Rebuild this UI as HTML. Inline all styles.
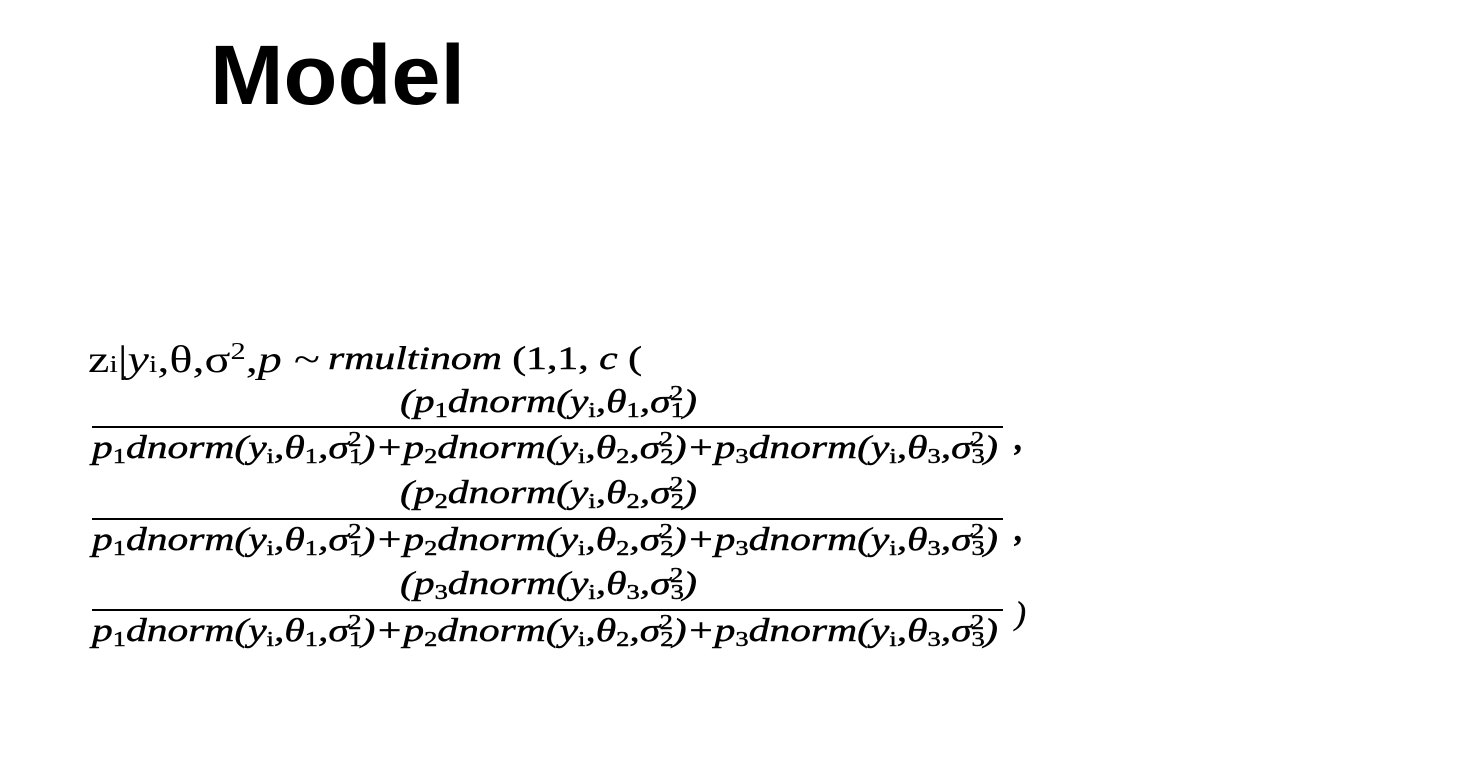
<!DOCTYPE html>
<html><head><meta charset="utf-8"><style>
body{margin:0;width:1458px;height:784px;background:#fff;overflow:hidden}
svg{position:absolute;left:0;top:0}
.t{font-family:"Liberation Sans",sans-serif;font-weight:bold;font-size:84px;fill:#000}
.m{font-family:"Liberation Serif",serif;font-style:italic;font-size:33px;fill:#000;stroke:#000;stroke-width:0.45}
.u{font-family:"Liberation Serif",serif;font-size:38px;fill:#000}
.s{font-size:21px;font-style:normal}
</style></head><body>
<svg width="1458" height="784" viewBox="0 0 1458 784">
<text class="t" x="210" y="104" textLength="255" lengthAdjust="spacingAndGlyphs">Model</text>
<text class="u" x="88" y="372" textLength="232" lengthAdjust="spacingAndGlyphs">z<tspan font-size="24">i</tspan>|<tspan font-style="italic">y</tspan><tspan font-size="24">i</tspan>,θ,σ<tspan font-size="24" dy="-13">2</tspan><tspan dy="13">,</tspan><tspan font-style="italic">p</tspan> ~</text>
<text class="m" x="328" y="369" font-size="28" stroke-width="0" textLength="314" lengthAdjust="spacingAndGlyphs">rmultinom <tspan font-style="normal">(1,1,</tspan> c <tspan font-style="normal">(</tspan></text>

<text class="m" x="400" y="412" textLength="297" lengthAdjust="spacingAndGlyphs">(p<tspan class="s" dy="5">1</tspan><tspan dy="-5">dnorm(y</tspan><tspan class="s" font-style="italic" dy="5">i</tspan><tspan dy="-5">,θ</tspan><tspan class="s" dy="5">1</tspan><tspan dy="-5">,σ</tspan><tspan class="s" dy="5">1</tspan><tspan class="s" dy="-17" dx="-11">2</tspan><tspan dy="12">)</tspan></text>
<rect x="92" y="426" width="911" height="2" fill="#000"/>
<text class="m" x="92" y="458" textLength="906" lengthAdjust="spacingAndGlyphs">p<tspan class="s" dy="5">1</tspan><tspan dy="-5">dnorm(y</tspan><tspan class="s" font-style="italic" dy="5">i</tspan><tspan dy="-5">,θ</tspan><tspan class="s" dy="5">1</tspan><tspan dy="-5">,σ</tspan><tspan class="s" dy="5">1</tspan><tspan class="s" dy="-17" dx="-11">2</tspan><tspan dy="12">)+p</tspan><tspan class="s" dy="5">2</tspan><tspan dy="-5">dnorm(y</tspan><tspan class="s" font-style="italic" dy="5">i</tspan><tspan dy="-5">,θ</tspan><tspan class="s" dy="5">2</tspan><tspan dy="-5">,σ</tspan><tspan class="s" dy="5">2</tspan><tspan class="s" dy="-17" dx="-11">2</tspan><tspan dy="12">)+p</tspan><tspan class="s" dy="5">3</tspan><tspan dy="-5">dnorm(y</tspan><tspan class="s" font-style="italic" dy="5">i</tspan><tspan dy="-5">,θ</tspan><tspan class="s" dy="5">3</tspan><tspan dy="-5">,σ</tspan><tspan class="s" dy="5">3</tspan><tspan class="s" dy="-17" dx="-11">2</tspan><tspan dy="12">)</tspan></text>
<text class="m" x="1015" y="450" font-style="normal" font-weight="bold">,</text>

<text class="m" x="400" y="503" textLength="297" lengthAdjust="spacingAndGlyphs">(p<tspan class="s" dy="5">2</tspan><tspan dy="-5">dnorm(y</tspan><tspan class="s" font-style="italic" dy="5">i</tspan><tspan dy="-5">,θ</tspan><tspan class="s" dy="5">2</tspan><tspan dy="-5">,σ</tspan><tspan class="s" dy="5">2</tspan><tspan class="s" dy="-17" dx="-11">2</tspan><tspan dy="12">)</tspan></text>
<rect x="92" y="518" width="911" height="2" fill="#000"/>
<text class="m" x="92" y="550" textLength="906" lengthAdjust="spacingAndGlyphs">p<tspan class="s" dy="5">1</tspan><tspan dy="-5">dnorm(y</tspan><tspan class="s" font-style="italic" dy="5">i</tspan><tspan dy="-5">,θ</tspan><tspan class="s" dy="5">1</tspan><tspan dy="-5">,σ</tspan><tspan class="s" dy="5">1</tspan><tspan class="s" dy="-17" dx="-11">2</tspan><tspan dy="12">)+p</tspan><tspan class="s" dy="5">2</tspan><tspan dy="-5">dnorm(y</tspan><tspan class="s" font-style="italic" dy="5">i</tspan><tspan dy="-5">,θ</tspan><tspan class="s" dy="5">2</tspan><tspan dy="-5">,σ</tspan><tspan class="s" dy="5">2</tspan><tspan class="s" dy="-17" dx="-11">2</tspan><tspan dy="12">)+p</tspan><tspan class="s" dy="5">3</tspan><tspan dy="-5">dnorm(y</tspan><tspan class="s" font-style="italic" dy="5">i</tspan><tspan dy="-5">,θ</tspan><tspan class="s" dy="5">3</tspan><tspan dy="-5">,σ</tspan><tspan class="s" dy="5">3</tspan><tspan class="s" dy="-17" dx="-11">2</tspan><tspan dy="12">)</tspan></text>
<text class="m" x="1015" y="541" font-style="normal" font-weight="bold">,</text>

<text class="m" x="400" y="594" textLength="297" lengthAdjust="spacingAndGlyphs">(p<tspan class="s" dy="5">3</tspan><tspan dy="-5">dnorm(y</tspan><tspan class="s" font-style="italic" dy="5">i</tspan><tspan dy="-5">,θ</tspan><tspan class="s" dy="5">3</tspan><tspan dy="-5">,σ</tspan><tspan class="s" dy="5">3</tspan><tspan class="s" dy="-17" dx="-11">2</tspan><tspan dy="12">)</tspan></text>
<rect x="92" y="609" width="911" height="2" fill="#000"/>
<text class="m" x="92" y="641" textLength="906" lengthAdjust="spacingAndGlyphs">p<tspan class="s" dy="5">1</tspan><tspan dy="-5">dnorm(y</tspan><tspan class="s" font-style="italic" dy="5">i</tspan><tspan dy="-5">,θ</tspan><tspan class="s" dy="5">1</tspan><tspan dy="-5">,σ</tspan><tspan class="s" dy="5">1</tspan><tspan class="s" dy="-17" dx="-11">2</tspan><tspan dy="12">)+p</tspan><tspan class="s" dy="5">2</tspan><tspan dy="-5">dnorm(y</tspan><tspan class="s" font-style="italic" dy="5">i</tspan><tspan dy="-5">,θ</tspan><tspan class="s" dy="5">2</tspan><tspan dy="-5">,σ</tspan><tspan class="s" dy="5">2</tspan><tspan class="s" dy="-17" dx="-11">2</tspan><tspan dy="12">)+p</tspan><tspan class="s" dy="5">3</tspan><tspan dy="-5">dnorm(y</tspan><tspan class="s" font-style="italic" dy="5">i</tspan><tspan dy="-5">,θ</tspan><tspan class="s" dy="5">3</tspan><tspan dy="-5">,σ</tspan><tspan class="s" dy="5">3</tspan><tspan class="s" dy="-17" dx="-11">2</tspan><tspan dy="12">)</tspan></text>
<text class="m" x="1015" y="624" font-style="normal">)</text>
</svg>
</body></html>
